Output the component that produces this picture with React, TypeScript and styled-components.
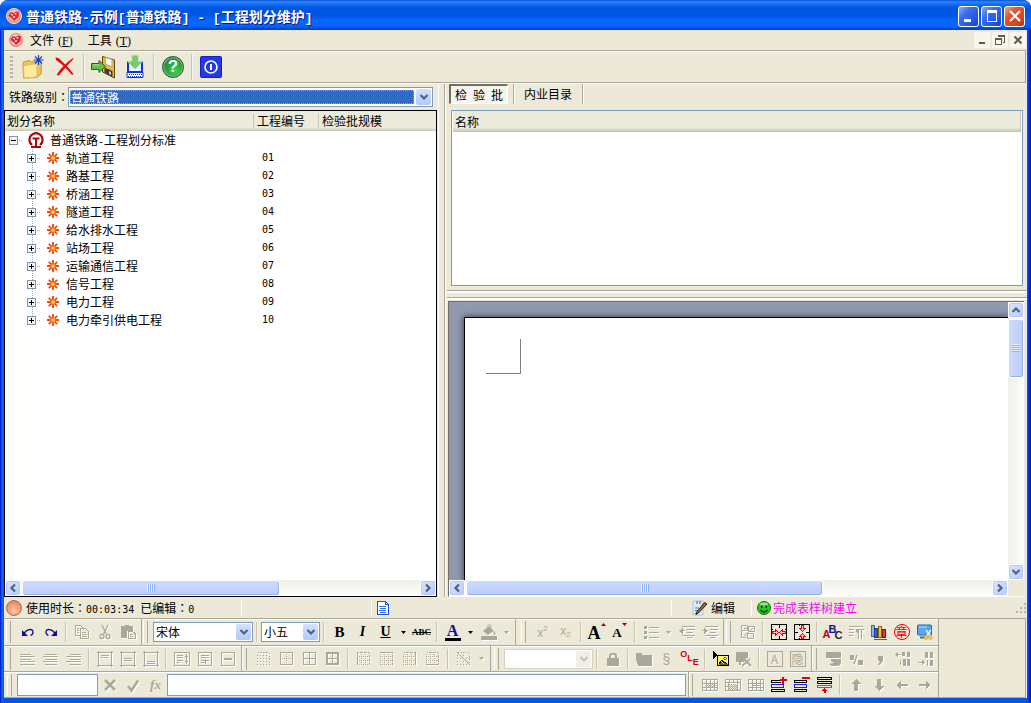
import React from 'react';
import styled, { createGlobalStyle, css } from 'styled-components';

const FACE = '#ece9d8';
const SHADE = '#aca899';
const CJK = '"Noto Sans CJK SC", sans-serif';

const GlobalStyle = createGlobalStyle`
  * { box-sizing: border-box; }
  body {
    margin: 0;
    background: #fff;
    font: 12px/16px ${CJK};
    color: #000;
  }
  button, input, select { font: inherit; color: inherit; margin: 0; padding: 0; border: 0; background: none; border-radius: 0; }
  svg { display: block; flex: none; }
`;

/* ---------- text ---------- */

const Latin = styled.span<{ $size?: number }>`
  font-family: "DejaVu Sans Mono", monospace;
  font-size: ${p => p.$size || 10}px;
  line-height: 10px;
  white-space: pre;
`;
const Colon = styled.span`font-family: "Noto Sans CJK JP", sans-serif;`;

/* Latin runs take half the width of a Chinese character. */
function Mixed({ text, size }: { text: string; size?: number }) {
  return (
    <>
      {text.split(/([\x20-\x7e]+|：)/).filter(Boolean).map((part, i) =>
        part === '：' ? <Colon key={i}>{part}</Colon>
          : /^[\x20-\x7e]/.test(part) ? <Latin key={i} $size={size}>{part}</Latin>
          : part)}
    </>
  );
}

/* ---------- window frame ---------- */

const Window = styled.div`
  min-height: 100vh;
  display: flex;
  flex-direction: column;
  border-radius: 8px 8px 0 0;
  overflow: hidden;
  background: linear-gradient(90deg, #0019cf 0, #0831d9 1px, #166aee 2px, #0855dd 4px, #0855dd calc(100% - 4px), #0048f0 calc(100% - 3px), #001dd0 calc(100% - 1px), #00138c 100%);
`;
const TitleBar = styled.header`
  height: 30px;
  display: flex;
  align-items: center;
  gap: 4px;
  padding: 2px 6px 0 6px;
  background: linear-gradient(180deg, #0a4fd6 0, #2f86ff 2px, #1670f5 4px, #0055e0 8px, #0056e6 15px, #0567ff 21px, #0566fc 26px, #0046d8 29px, #003ccb 30px);
`;
const Title = styled.h1`
  flex: 1;
  margin: 0;
  font-size: 14px;
  line-height: 20px;
  font-weight: 700;
  color: #fff;
  text-shadow: 1px 1px 0 #0a1883;
  white-space: nowrap;
  ${Latin} { font-family: "Liberation Mono", monospace; }
`;
const CaptionButtons = styled.div`display: flex; gap: 2px;`;
const CaptionButton = styled.button<{ $red?: boolean }>`
  width: 21px;
  height: 21px;
  display: grid;
  place-items: center;
  border: 1px solid #fff;
  border-radius: 3px;
  color: #fff;
  background: ${p => p.$red
    ? 'linear-gradient(135deg, #f0a088 0, #e3552f 35%, #d8431c 75%, #a93513 100%)'
    : 'linear-gradient(135deg, #8aa9f5 0, #3a6cf0 35%, #2257e2 75%, #1640b8 100%)'};
`;
const Client = styled.main`
  flex: 1;
  margin: 0 4px 5px;
  display: flex;
  flex-direction: column;
  background: ${FACE};
`;

/* ---------- menu and main toolbar ---------- */

const MenuBar = styled.nav`
  height: 20px;
  display: flex;
  align-items: center;
  padding: 0 1px 0 4px;
`;
const MenuItem = styled.button`
  height: 18px;
  margin-left: 6px;
  margin-right: 8px;
  line-height: 18px;
  white-space: nowrap;
  ${Latin} { font-family: "Liberation Serif", serif; font-size: 12px; padding: 0 1px; }
`;
const MdiButtons = styled.div`margin-left: auto; display: flex; gap: 2px;`;
const MdiButton = styled.button`
  width: 16px;
  height: 16px;
  display: grid;
  place-items: center;
  background: #f7f5ec;
  color: #5f5d52;
`;
const MainToolbar = styled.div`
  height: 33px;
  display: flex;
  align-items: center;
  margin-right: 1px;
  border: 1px solid ${SHADE};
  border-left: 0;
  box-shadow: inset 0 1px 0 #fff, 0 1px 0 #fff;
`;
const DotGrip = styled.span`
  width: 3px;
  height: 22px;
  margin: 0 4px 0 6px;
  background: repeating-linear-gradient(180deg, #b9b5a4 0, #b9b5a4 2px, transparent 2px, transparent 4px);
`;
const MainButton = styled.button`
  width: 32px;
  height: 28px;
  display: grid;
  place-items: center;
`;
const MainDivider = styled.span`
  width: 2px;
  height: 26px;
  margin: 0 2px;
  border-left: 1px solid #c9c5b2;
  border-right: 1px solid #f8f7f0;
`;
const HelpDisc = styled.span`
  width: 22px;
  height: 22px;
  border-radius: 50%;
  border: 1px solid #2c4f36;
  box-shadow: inset 0 0 0 1px #9fb5a4;
  background: radial-gradient(circle at 60% 70%, #3fd04a 0, #22a238 50%, #1c7a2e 100%);
  color: #fff;
  font: 700 17px/20px "Liberation Sans", sans-serif;
  text-align: center;
`;

/* ---------- split panes ---------- */

const Workspace = styled.section`
  flex: 1;
  display: grid;
  grid-template-columns: minmax(0, 433fr) 11px minmax(0, 577fr);
  padding: 1px 2px 0 0;
  min-height: 400px;
`;
const Splitter = styled.div<{ $flat?: boolean }>`
  ${p => p.$flat ? css`
    height: 8px;
    margin: 4px -2px 0 -1px;
    border-top: 1px solid ${SHADE};
    border-bottom: 1px solid ${SHADE};
    box-shadow: inset 0 2px 0 #fff, 0 2px 0 #fff;
  ` : css`
    width: 8px;
    margin-left: 1px;
    border-left: 1px solid #fff;
    border-right: 1px solid #fff;
    box-shadow: inset -1px 0 0 ${SHADE};
  `}
`;
const LeftPane = styled.div`display: flex; flex-direction: column;`;
const RightPane = styled.div`display: flex; flex-direction: column;`;

const LevelRow = styled.label`
  height: 26px;
  display: flex;
  align-items: center;
  padding: 0 4px 0 5px;
  white-space: nowrap;
`;
const ComboBox = styled.span<{ $width?: number; $off?: boolean }>`
  height: 20px;
  display: flex;
  padding: 1px;
  ${p => p.$width ? css`width: ${p.$width}px;` : css`flex: 1; margin-left: -1px;`}
  background: #fff;
  border: 1px solid ${p => (p.$off ? '#d5d2c3' : '#7f9db9')};
`;
const ComboField = styled.select<{ $selected?: boolean }>`
  appearance: none;
  flex: 1;
  min-width: 0;
  padding: 0 1px;
  line-height: 14px;
  outline: none;
  opacity: 1;
  ${p => p.$selected && css`
    margin: 1px 2px 1px 0;
    color: #fff;
    background: #316ac5;
    border: 1px dotted #d9a23a;
    padding: 0;
  `}
`;
const ComboArrow = styled.span<{ $off?: boolean }>`
  width: 15px;
  display: grid;
  place-items: center;
  border-radius: 2px;
  color: ${p => (p.$off ? '#c5c2b2' : '#4d6185')};
  background: ${p => (p.$off ? '#f0efe6' : 'linear-gradient(180deg, #d3e0fd, #b4c8f6)')};
`;

const TreeBox = styled.div`
  flex: 1;
  display: flex;
  flex-direction: column;
  background: #fff;
  border: 1px solid #000;
`;
const TreeTable = styled.table`
  width: 100%;
  table-layout: fixed;
  border-collapse: collapse;
  td { height: 18px; padding: 0 0 0 9px; line-height: 16px; vertical-align: middle; white-space: nowrap; }
  td:first-child { padding: 0; }
`;
const HeadCell = styled.th<{ $width?: number; $first?: boolean }>`
  height: 20px;
  ${p => p.$width && css`width: ${p.$width}px;`}
  padding: 0 0 0 ${p => (p.$first ? 2 : 4)}px;
  font-weight: 400;
  text-align: left;
  white-space: nowrap;
  background:
    linear-gradient(#c9c6b5, #c9c6b5) left center / ${p => (p.$first ? 0 : 1)}px 14px no-repeat,
    linear-gradient(180deg, #ebeadb 0, #ebeadb 17px, #dedbc9 18px, #cbc7b8 20px);
`;
const NodeCell = styled.div<{ $child?: boolean }>`
  display: flex;
  align-items: center;
  height: 18px;
  padding-left: ${p => (p.$child ? 22 : 4)}px;
`;
const Toggle = styled.button`width: 16px; height: 18px;`;
const NodeLabel = styled.span`margin-left: 6px;`;
const WorkMark = styled.span`margin-left: 3px;`;
const CodeText = styled.div`
  height: 18px;
  display: flex;
  align-items: center;
`;
const Fill = styled.div`flex: 1;`;

/* ---------- scroll bars ---------- */

const Scroll = styled.div<{ $vertical?: boolean }>`
  display: flex;
  flex-direction: ${p => (p.$vertical ? 'column' : 'row')};
  ${p => (p.$vertical ? 'width: 16px;' : 'height: 16px;')}
  background: linear-gradient(${p => (p.$vertical ? '90deg' : '180deg')}, #f0efe8, #fdfdfb);
`;
const ScrollButton = styled.button`
  width: 16px;
  height: 16px;
  display: grid;
  place-items: center;
  border: 1px solid #fff;
  border-radius: 3px;
  box-shadow: inset 0 0 0 1px #b4c8f6;
  background: linear-gradient(135deg, #dbe5fe, #b9cbf8);
  color: #4d6185;
`;
const Track = styled.div<{ $vertical?: boolean }>`
  flex: 1;
  display: flex;
  padding: ${p => (p.$vertical ? '1px 0' : '0 1px')};
`;
const Thumb = styled.div<{ $part: string; $vertical?: boolean }>`
  display: grid;
  place-items: center;
  ${p => (p.$vertical ? css`width: 16px; height: ${p.$part};` : css`height: 16px; width: ${p.$part};`)}
  border: 1px solid #fff;
  border-radius: 3px;
  box-shadow: inset -1px -1px 0 #98b1e4;
  background: linear-gradient(${p => (p.$vertical ? '90deg' : '180deg')}, #cbdafe, #bccdfa);
`;
const Ridges = styled.span<{ $vertical?: boolean }>`
  width: 8px;
  height: 8px;
  background: repeating-linear-gradient(${p => (p.$vertical ? '180deg' : '90deg')}, #eef4fe 0, #eef4fe 1px, #8cb0f8 1px, #8cb0f8 2px);
`;

/* ---------- right pane ---------- */

const Tabs = styled.div`
  height: 26px;
  display: flex;
  align-items: flex-start;
  padding-left: 1px;
`;
const Tab = styled.button<{ $on?: boolean }>`
  height: 20px;
  padding: 0 1px 0 5px;
  line-height: 18px;
  white-space: nowrap;
  ${p => p.$on ? css`
    border: 1px solid #fff;
    border-top: 2px solid #716f64;
    border-left: 2px solid #716f64;
    background: #f6f4ec;
    padding: 0 4px;
  ` : css`margin: 0 4px;`}
`;
const TabDivider = styled.span`
  width: 2px;
  height: 20px;
  margin-left: 5px;
  border-left: 1px solid ${SHADE};
  border-right: 1px solid #fff;
`;
const ListBox = styled.div`
  height: 176px;
  margin: 0 2px 0 3px;
  padding: 0 1px;
  background: #fff;
  border: 1px solid #7f9db9;
`;
const ListTable = styled.table`
  width: 100%;
  border-collapse: collapse;
  th { height: 21px; border-right: 1px solid #c9c6b5; }
`;
const DocFrame = styled.div`
  flex: 1;
  margin: 3px 1px 0 0;
  display: grid;
  grid-template-columns: minmax(0, 1fr) 16px;
  grid-template-rows: minmax(0, 1fr) 16px;
  border-top: 1px solid #716f64;
  border-left: 1px solid #716f64;
  border-bottom: 1px solid #fff;
`;
const Desk = styled.div`
  display: flex;
  padding: 15px 0 0 15px;
  overflow: hidden;
  background: #9099ae;
`;
const Paper = styled.div`
  flex: 1;
  padding: 21px;
  background: #fff;
  border-top: 1px solid #000;
  border-left: 1px solid #000;
  box-shadow: 0 0 6px 1px #4a4f5f;
`;
const CornerMark = styled.div`
  width: 35px;
  height: 35px;
  border-right: 1px solid #808080;
  border-bottom: 1px solid #808080;
`;

/* ---------- status bar ---------- */

const StatusBar = styled.div`
  height: 20px;
  margin-top: 1px;
  display: flex;
  align-items: center;
  white-space: nowrap;
`;
const StatusPart = styled.div<{ $width?: number; $indent: number; $line?: boolean }>`
  height: 16px;
  display: flex;
  align-items: center;
  gap: 3px;
  ${p => p.$width ? css`width: ${p.$width}px;` : css`flex: 1;`}
  padding-left: ${p => p.$indent}px;
  ${p => p.$line && css`border-left: 1px solid #fff;`}
`;
const Notice = styled.span`color: #f0f; margin-left: -1px;`;
const Ball = styled.span`
  width: 16px;
  height: 16px;
  margin-right: 1px;
  border-radius: 50%;
  border: 1px solid #b06a50;
  background: radial-gradient(circle at 50% 70%, #ffc9a8 0, #f5946c 60%, #e0704a 100%);
`;

/* ---------- format bars ---------- */

const Bars = styled.div`
  display: flex;
  flex-direction: column;
  align-items: flex-start;
  margin-right: 1px;
  border-top: 1px solid ${SHADE};
  border-right: 1px solid ${SHADE};
  border-bottom: 1px solid ${SHADE};
`;
const Bar = styled.div`
  height: 26px;
  width: 935px;
  display: flex;
  box-shadow: inset 0 1px 0 #fff;
  border-right: 1px solid ${SHADE};
  & + & { border-top: 1px solid ${SHADE}; }
`;
const Group = styled.div<{ $last?: boolean }>`
  display: flex;
  align-items: center;
  padding-right: 2px;
  ${p => !p.$last && css`border-right: 1px solid ${SHADE};`}
`;
const Grip = styled.span<{ $space: number }>`
  width: ${p => p.$space}px;
  height: 22px;
  display: flex;
  justify-content: flex-end;
  padding-right: 5px;
  &::after {
    content: '';
    width: 3px;
    border-left: 1px solid #fff;
    border-right: 1px solid ${SHADE};
  }
`;
const Tool = styled.button<{ $narrow?: boolean }>`
  width: ${p => (p.$narrow ? 13 : 23)}px;
  height: 22px;
  display: grid;
  place-items: center;
  &:disabled { color: #aca899; }
  &:disabled svg { filter: drop-shadow(1px 1px 0 #fff); }
`;
const ToolDivider = styled.span`
  width: 2px;
  height: 20px;
  margin: 0 3px;
  border-left: 1px solid #c5c2b0;
  border-right: 1px solid #f8f7f0;
`;
const Letter = styled.span<{ $size?: number; $italic?: boolean; $under?: boolean; $strike?: boolean; $color?: string }>`
  font: ${p => (p.$italic ? 'italic ' : '')}700 ${p => p.$size || 14}px/16px "Liberation Serif", serif;
  color: ${p => p.$color || 'inherit'};
  text-decoration: ${p => (p.$under ? 'underline' : p.$strike ? 'line-through' : 'none')};
`;
const InkStack = styled.span`
  width: 16px;
  height: 17px;
  border-bottom: 3px solid #000;
  text-align: center;
  ${Letter} { display: block; line-height: 14px; }
`;
const Script = styled.span<{ $low?: boolean }>`
  display: flex;
  align-items: ${p => (p.$low ? 'flex-start' : 'flex-end')};
  height: 14px;
  font: 12px/12px "Liberation Sans", sans-serif;
  small { font-size: 8px; line-height: 8px; align-self: ${p => (p.$low ? 'flex-end' : 'flex-start')}; }
`;
const Resize = styled.span`
  display: flex;
  align-items: flex-start;
  height: 18px;
  ${Letter} { line-height: 20px; }
`;
const Framed = styled.span<{ $color?: string; $round?: boolean }>`
  width: 16px;
  height: 16px;
  border: 1px solid ${p => p.$color || 'currentColor'};
  border-radius: ${p => (p.$round ? '50%' : '0')};
  color: ${p => p.$color || 'inherit'};
  font-size: 12px;
  line-height: 13px;
  display: flex;
  justify-content: center;
  white-space: nowrap;
`;
const OleMark = styled.span`
  display: flex;
  color: #d80008;
  font: 700 9px/9px "Liberation Sans", sans-serif;
  span:nth-child(1) { padding-bottom: 8px; }
  span:nth-child(2) { padding-top: 4px; }
  span:nth-child(3) { padding-top: 8px; }
`;
const AbcMark = styled.span`
  display: flex;
  font: 700 11px/11px "Liberation Sans", sans-serif;
  span { margin: 0 -1px; }
  span:nth-child(1) { padding-top: 5px; color: #c00010; }
  span:nth-child(2) { padding-bottom: 5px; color: #10109c; }
  span:nth-child(3) { padding-top: 6px; color: #222; }
`;
const Entry = styled.input<{ $width: number }>`
  width: ${p => p.$width}px;
  height: 22px;
  padding: 0 3px;
  background: #fff;
  border: 1px solid #7f9db9;
`;

/* ---------- drawings ---------- */

const Art = ({ d, fill, children, soft, size = 16, w = 1 }: {
  d?: string; fill?: string; children?: React.ReactNode; soft?: boolean; size?: number; w?: number;
}) => (
  <svg width={size} height={size} viewBox={`0 0 ${size} ${size}`} fill="none" stroke="currentColor"
    strokeWidth={w} shapeRendering={soft ? 'auto' : 'crispEdges'} aria-hidden="true">
    {fill && <path d={fill} fill="currentColor" stroke="none" />}
    {d && <path d={d} />}
    {children}
  </svg>
);

const Caret = () => (
  <svg width="5" height="3" viewBox="0 0 5 3" aria-hidden="true"><path d="M0 0h5L2.500 3z" fill="currentColor" /></svg>
);
const Nudge = ({ up }: { up?: boolean }) => (
  <svg width="5" height="3" viewBox="0 0 5 3" aria-hidden="true"><path d={up ? 'M0 3h5L2.500 0z' : 'M0 0h5L2.500 3z'} fill="#a00010" /></svg>
);
const turn = { left: 90, up: 180, right: 270, down: 0 };
const Chevron = ({ to = 'down' }: { to?: keyof typeof turn }) => (
  <svg width="10" height="10" viewBox="0 0 10 10" aria-hidden="true">
    <path d="M1.500 3L5 6.500 8.500 3" fill="none" stroke="currentColor" strokeWidth="2.200" transform={`rotate(${turn[to]} 5 5)`} />
  </svg>
);

const AppLogo = () => (
  <svg width="16" height="16" viewBox="0 0 16 16" aria-hidden="true">
    <circle cx="8" cy="8" r="7.500" fill="#ef8f74" stroke="#fbe0d4" />
    <circle cx="8" cy="7.500" r="5.500" fill="#f9cdbc" />
    <path d="M2.500 7l2.500-3 2.500 1 2.500-1.500 3 1-.5 4.500L8 13l-2-2.500L3.500 9z" fill="#d8243c" />
    <path d="M5 6l2 1.500M8.500 5.500l2 .5M7 9.500l2-1" stroke="#fbd6cc" strokeWidth="1.400" fill="none" />
  </svg>
);
const RailMark = () => (
  <svg width="16" height="16" viewBox="0 0 16 16" fill="none" stroke="#a4070b" aria-hidden="true">
    <path d="M4 13A6.600 6.600 0 1 1 12 13" strokeWidth="2.200" />
    <path d="M8 0v2" strokeWidth="2" />
    <path d="M4.500 6.500h7" strokeWidth="2" />
    <path d="M8 7v8" strokeWidth="2" />
    <path d="M3 15h10" strokeWidth="1.800" />
  </svg>
);
const Spark = () => (
  <svg width="14" height="14" viewBox="0 0 14 14" aria-hidden="true">
    <path d="M7 1v12M1 7h12M2.800 2.800l8.400 8.400M11.200 2.800l-8.400 8.400" stroke="#ef4a1c" strokeWidth="1.900" />
    <circle cx="7" cy="7" r="2.600" fill="#f77b20" />
    <circle cx="7" cy="7" r="1.500" fill="#ffe24a" />
  </svg>
);
const Branch = ({ open, last }: { open?: boolean; last?: boolean }) => (
  <svg width="16" height="18" viewBox="0 0 16 18" shapeRendering="crispEdges" aria-hidden="true">
    {!open && <path d={last ? 'M5.500 0v9' : 'M5.500 0v18'} stroke="#aca899" strokeDasharray="1 1" />}
    <path d="M10 9.500h4" stroke="#aca899" strokeDasharray="1 1" />
    <rect x="0.500" y="5.500" width="8" height="8" fill="#f4f3ee" stroke="#7b95b5" />
    <path d={open ? 'M2 9.500h5' : 'M2 9.500h5M4.500 7v5'} stroke="#000" />
  </svg>
);

const NewFolder = () => (
  <svg width="24" height="24" viewBox="0 0 24 24" aria-hidden="true">
    <path d="M2 8.500l.5-1.500 6-1.500L10.500 7l9-1.500 1 1.500-.5 12-4 3.500L2.500 23z" fill="#efc552" stroke="#c39a35" />
    <path d="M2.500 10.500l13.500-2V22l-13 1z" fill="#fdeaa0" stroke="#dfbb50" />
    <path d="M17.500 0v10M12.500 5h10M14 1.500l7 7M21 1.500l-7 7" stroke="#1247c8" strokeWidth="1.200" />
  </svg>
);
const RedCross = () => (
  <svg width="20" height="20" viewBox="0 0 20 20" aria-hidden="true">
    <path d="M.5.500l3 .5C8 5 13 10 18.500 17l-1.500 1C12 12 7 7 1 3zM18 1l.5 1C13 8 8 13 4 18.500L1.500 18C6 11 11 6 18 1z" fill="#e20d10" />
  </svg>
);
const SaveDisk = () => (
  <svg width="26" height="24" viewBox="0 0 26 24" aria-hidden="true">
    <path d="M12.500 1.500l12 3.500v18L12.500 17z" fill="#f2bd22" stroke="#5c4708" />
    <path d="M15.500 2.500l6.500 2v7.500l-6.500-3z" fill="#f4f4f4" stroke="#a9a9a9" />
    <path d="M14.500 12.500l8 3.500V22l-8-4.500z" fill="#3a3a3a" />
    <path d="M19 16l2 1v3l-2-1z" fill="#ccc" />
    <path d="M1.500 8.500H9v-3l6.500 6-6.500 6v-3H1.500z" fill="#66bd4a" stroke="#25621d" />
    <path d="M3 10h6.500" stroke="#b8eb9f" />
  </svg>
);
const ImportPc = () => (
  <svg width="18" height="24" viewBox="0 0 18 24" aria-hidden="true">
    <path d="M2 7h14v10H2z" fill="#e9efff" stroke="#1430d8" strokeWidth="2" />
    <path d="M6 .500h6v6h4.500L9 14 1.500 6.500H6z" fill="#79c964" stroke="#a4dc93" />
    <path d="M1 17.500h16v5H1z" fill="#fff" stroke="#1430d8" />
    <path d="M3 19.500h13M2 21.500h13" stroke="#1430d8" strokeDasharray="1 1" />
  </svg>
);
const Power = () => (
  <svg width="22" height="22" viewBox="0 0 22 22" fill="none" aria-hidden="true">
    <rect x="0.500" y="0.500" width="21" height="21" rx="1" fill="#2438ea" stroke="#141fc0" />
    <circle cx="11" cy="11" r="6" stroke="#fff" strokeWidth="1.700" />
    <path d="M11 8v6" stroke="#fff" strokeWidth="2" />
  </svg>
);
const Sheet = () => (
  <Art size={14}><path d="M1.500.5h8l3 3v10h-11z" fill="#fff" stroke="#1a52e0" /><path d="M9.500.5v3h3" stroke="#1a52e0" /><path d="M4 5.500h6M4 7.500h6M4 9.500h6M4 11.500h6" stroke="#2b6cf0" /><path d="M3 5.500h1M3 9.500h1" stroke="#e33" /></Art>
);
const EditSheet = () => (
  <svg width="16" height="16" viewBox="0 0 16 16" aria-hidden="true">
    <path d="M1 1h10v14H1z" fill="#dcecff" stroke="#a9c2e6" />
    <path d="M3 8h4M3 10.500h3" stroke="#3777c8" />
    <path d="M4 13l8.500-10.500L15 4l-8.500 9L4 14.500z" fill="#a96a22" stroke="#2a1a08" />
    <path d="M5 1v3M8 1v3" stroke="#d22" />
  </svg>
);
const Smiley = () => (
  <svg width="14" height="14" viewBox="0 0 14 14" aria-hidden="true">
    <circle cx="7" cy="7" r="6.500" fill="#2fc422" stroke="#14720e" />
    <ellipse cx="7" cy="3" rx="4" ry="1.500" fill="#8cf07c" />
    <path d="M4.700 4.500v2.500M9.300 4.500v2.500M3.500 8.800c1.500 3 5.500 3 7 0" stroke="#032" strokeWidth="1.400" fill="none" />
  </svg>
);
const ResizeGrip = () => (
  <svg width="12" height="12" viewBox="0 0 12 12" aria-hidden="true">
    <path d="M9 1h2v2H9zM5 5h2v2H5zM9 5h2v2H9zM1 9h2v2H1zM5 9h2v2H5zM9 9h2v2H9z" fill="#b8b4a3" />
  </svg>
);

const I = {
  undo: <Art soft w={1.3} d="M4 9.500C6 5 13 4 13 8c0 1.500-1 3-2.500 3.500" fill="M2 6v6h6z" />,
  redo: <Art soft w={1.3} d="M12 9.500C10 5 3 4 3 8c0 1.500 1 3 2.500 3.500" fill="M14 6v6H8z" />,
  copy: <Art d="M6.500 11.500h-5v-10h5l3 3v1M6.500 4.500h5l3 3v7h-8zM3 4.500h2M3 6.500h2M3 8.500h2M8 8.500h4M8 10.500h5M8 12.500h5" />,
  cut: <Art soft w={1.3} d="M5 1l4.500 9.500M11 1L6.500 10.500"><circle cx="5" cy="12.500" r="2" /><circle cx="11" cy="12.500" r="2" /></Art>,
  paste: <Art fill="M1 2h4V1h4v1h4v5H7v7H1z" d="M8.500 7.500h4l2.500 2v5H8.500zM10 10.500h3M10 12.500h3" />,
  bucket: <Art soft fill="M2 7l6-5 5 5-6 4zM13 7c2 2 2 4 1 4s-2-2-1-4zM0 12h16v4H0z" d="M7 5V1.500c0-1 3-1 3 0V7" />,
  bullets: <Art d="M6 3.500h10M6 8.500h10M6 13.500h10" fill="M1 2h3v3H1zM1 7h3v3H1zM1 12h3v3H1z" />,
  outdent: <Art d="M3 2.500h13M8 5.500h8M8 8.500h6M3 11.500h13M8 13.500h6M3 6.500h3" fill="M0 6.500L4 4v6z" />,
  indent: <Art d="M3 2.500h13M8 5.500h8M8 8.500h6M3 11.500h13M8 13.500h6M0 6.500h3" fill="M6 6.500L2 4v6z" />,
  find: <Art soft d="M1.500 1.500h6v5h-6zM1.500 6.500v7h5M4 4.500h4M8.500 2.500h6v5h-6zM7.500 9.500h6v5h-6zM4 12L13 4" />,
  mergeH: <Art><path d="M.5.500h15v15H.5zM8.500 0v4M8.500 12v4M0 5.500h2M14 5.500h2" stroke="#000" /><path d="M1.500 7.500h3v-2l3 3-3 3v-2h-3zM14.500 7.500h-3v-2l-3 3 3 3v-2h3z" fill="#ffb9c4" stroke="#e80010" /></Art>,
  mergeV: <Art><path d="M.5.500h15v15H.5zM0 8.500h4M12 8.500h4M5.500 0v2M5.500 14v2" stroke="#000" /><path d="M7.500 1.500v3h-2l3 3 3-3h-2v-3zM7.500 14.500v-2h-2l3-3 3 3h-2v2z" fill="#ffb9c4" stroke="#e80010" /></Art>,
  pilcrow: <Art d="M1 2.500h14M1 5.500h5M1 8.500h5M1 11.500h4M9 5.500h7M10.500 6v9M13.500 6v9" fill="M8 5h3v4H9L8 8z" />,
  books: <Art><path d="M.5 1.500h3v11h-3z" fill="#8ab6ee" stroke="#3c6cb4" /><path d="M3.500 4.500h3v9h-3z" fill="#3565bd" stroke="#1c3f80" /><path d="M7.500 2.500h3v11h-3z" fill="#f0c040" stroke="#8a6410" /><path d="M11.500 5.500h3v8h-3z" fill="#d84020" stroke="#7d1508" /><path d="M3 15.500h13" stroke="#606060" /></Art>,
  screenCut: <Art soft><rect x="0.500" y="1" width="14" height="10" rx="1" fill="#58a8f0" stroke="#2466ad" /><path d="M2 3h8" stroke="#b9dcff" /><path d="M3 13.500h6" stroke="#3c6fa8" strokeWidth="2" /><path d="M9 6l4.500 6M14 6l-4.500 6" stroke="#eef4ff" strokeWidth="1.500" /><circle cx="9" cy="13.500" r="1.700" fill="#ffe37a" stroke="#d99500" /><circle cx="13.500" cy="13.500" r="1.700" fill="#ffe37a" stroke="#d99500" /></Art>,
  alignL: <Art d="M0 3.500h11M0 5.500h15M0 8.500h11M0 10.500h15M0 13.500h15" />,
  alignC: <Art d="M2 3.500h12M0 5.500h15M2 8.500h12M0 10.500h15M2 13.500h12" />,
  alignR: <Art d="M4 3.500h11M0 5.500h15M4 8.500h11M0 10.500h15M4 13.500h11" />,
  top: <Art d="M1.500 0v16M14.500 0v16M0 1.500h16M0 14.500h16M4 4.500h8M4 6.500h8" />,
  middle: <Art d="M1.500 0v16M14.500 0v16M0 1.500h16M0 14.500h16M4 7.500h8M4 9.500h8" />,
  bottom: <Art d="M1.500 0v16M14.500 0v16M0 1.500h16M0 14.500h16M4 10.500h8M4 12.500h8" />,
  spaceV: <Art d="M.5 1.500h15v13H.5zM3 4.500h6M3 6.500h6M3 9.500h6M3 11.500h3M12.500 3v10M11 5.500h3M11 10.500h3" />,
  wrap: <Art d="M1.500 1.500h13v13h-13zM4 4.500h8M4 6.500h8M4 9.500h8M4 11.500h4M8.500 8v5" />,
  single: <Art d="M1.500 1.500h13v13h-13zM4 7.500h8M4 8.500h8" />,
  strokeNone: <Art><path d="M1.500 1.500h12v12h-12zM7.500 1v13M1 7.500h13M4.500 1v13M10.500 1v13" strokeDasharray="1 2" /></Art>,
  gridOut: <Art d="M1.500 1.500h12v12h-12z"><path d="M7.500 3v9M3 7.500h9" strokeDasharray="1 1" /></Art>,
  gridAll: <Art d="M1.500 1.500h12v12h-12zM7.500 1v13M1 7.500h13" />,
  gridThick: <Art><path d="M2 2h11v11H2z" strokeWidth="2" /><path d="M7.500 2v11M2 7.500h11" /></Art>,
  diag: <Art d="M1 1l13 13"><path d="M1.500 1.500h12v12h-12zM7.500 1v13M1 7.500h13" strokeDasharray="1 2" /></Art>,
  lock: <Art soft fill="M2 7h12v8H2z" w={2} d="M5 8V5c0-3 6-3 6 0v3" />,
  folder: <Art fill="M0 2h6v2h10v11H2L0 8z" />,
  percent: <Art soft fill="M1 4h4v5H1zM9 9h5v5H9z" d="M8 4l-3 9" w={1.5} />,
  comma: <Art soft fill="M6 5h5v5l-3 4H6l2-4H6z" />,
  picture: <Art><path d="M4.500 4.500h11v10h-11z" fill="#fff75a" stroke="#000" strokeWidth="1.500" /><path d="M0 0l4 4-4 4z" fill="#000" stroke="none" /><path d="M5 14l3-3 2 2 2-2 3 3z" fill="#666620" stroke="none" /><path d="M6 13l3-4 2 3 1-1 2 2" stroke="#000" /><circle cx="12" cy="7.500" r="1.200" fill="#fff" stroke="#555" /></Art>,
  pictureOff: <Art soft fill="M0 1h12v6l-3 1-1 3H0z" w={2} d="M7 7l8 8M14 8l-8 7M4 11v3" />,
  currency: <Art soft fill="M0 1h15v6H0zM5 8h10v4c0 2-2 3-4 3H6l-3-2 5-1-3-2z" />,
  decMore: <Art fill="M7 1h3v4H7zM12 1h3v5h-3zM5 9h1v5H5zM8 8h3v7H8zM12 8h3v7h-3zM0 3.500L3 1v5z" d="M3 3.500h3" />,
  decLess: <Art fill="M7 1h3v6H7zM12 1h3v6h-3zM12 9h3v6h-3zM9 9h1v6H9zM7 11.500L4 9v5z" d="M0 11.500h4" />,
  no: <Art soft w={2.5} d="M3 3l10 10M13 3L3 13" />,
  yes: <Art soft w={2.5} d="M3 9l3.500 4.500L13 3.500" />,
  cells: <Art d="M.5 2.500h15v11H.5zM0 6.500h16M0 10.500h16M4.500 2v12M8.500 2v12M12.500 2v12"><path d="M4 7.500h10M4 9.500h10M5 8.500h10" strokeDasharray="1 1" /></Art>,
  cellsCol: <Art d="M.5 2.500h15v11H.5zM0 5.500h16M4.500 2v4M8.500 2v4M12.500 2v4M3.500 6v8M12.500 6v8M0 9.500h3"><path d="M4 7.500h9M5 8.500h8M4 9.500h9M5 10.500h8M4 11.500h9M5 12.500h8" strokeDasharray="1 1" /></Art>,
  cellsRow: <Art d="M.5 2.500h15v11H.5zM0 6.500h16M0 10.500h16M4.500 2v12M8.500 2v12M12.500 2v12M5 8.500h8" />,
  rowAdd: <Art><path d="M.5 3.500h9M.5 5.500h9M.5 3v3M.5 12.500h13v2H.5z" stroke="#000" /><path d="M.5 7.500h12v3H.5z" stroke="#1a1af0" strokeWidth="1.500" /><path d="M12 0v7M9 3h7" stroke="#e00010" strokeWidth="2" /></Art>,
  rowDel: <Art><path d="M.5 3.500h12v2H.5zM.5 12.500h12v2H.5z" stroke="#000" /><path d="M.5 7.500h12v3H.5z" stroke="#1a1af0" strokeWidth="1.500" /><path d="M8 1h8" stroke="#e00010" strokeWidth="2" /></Art>,
  rowEnd: <Art><path d="M.5.500h14v2H.5zM.5 4.500h14v2H.5z" stroke="#000" /><path d="M.5 8.500h14v2H.5z" stroke="#f010e0" /><path d="M7.500 11l3 3h-2v2h-2v-2h-2z" fill="#e00010" stroke="none" /></Art>,
  up: <Art fill="M8 2l5 5h-3v7H6V7H3z" />,
  down: <Art fill="M8 14l5-5h-3V2H6v7H3z" />,
  left: <Art fill="M2 8l5-4v3h7v2H7v3z" />,
  right: <Art fill="M14 8L9 4v3H2v2h7v3z" />,
};

/* Outline variants: one solid edge each, dotted elsewhere. */
const Edge = ({ d }: { d: string }) => (
  <Art d={d}><path d="M1.500 1.500h12v12h-12zM5.500 1v13M9.500 1v13M1 5.500h13M1 9.500h13" strokeDasharray="1 1" /></Art>
);

/* ---------- parts built from the above ---------- */

function ScrollBar({ vertical, part, label }: { vertical?: boolean; part: string; label: string }) {
  return (
    <Scroll $vertical={vertical} role="group" aria-label={label}>
      <ScrollButton aria-label={vertical ? '向上' : '向左'}><Chevron to={vertical ? 'up' : 'left'} /></ScrollButton>
      <Track $vertical={vertical}><Thumb $vertical={vertical} $part={part}><Ridges $vertical={vertical} /></Thumb></Track>
      <ScrollButton aria-label={vertical ? '向下' : '向右'}><Chevron to={vertical ? 'down' : 'right'} /></ScrollButton>
    </Scroll>
  );
}

function Combo({ value, label, width, selected, off }: {
  value: string; label: string; width?: number; selected?: boolean; off?: boolean;
}) {
  return (
    <ComboBox $width={width} $off={off}>
      <ComboField aria-label={label} $selected={selected} disabled={off} defaultValue={value}><option>{value}</option></ComboField>
      <ComboArrow $off={off}><Chevron /></ComboArrow>
    </ComboBox>
  );
}

type ToolSpec = [string, React.ReactNode, boolean?];
/* A run of equal buttons: name, drawing, and whether it is available. */
const Run = ({ items }: { items: ToolSpec[] }) => (
  <>{items.map(([name, art, on]) => <Tool key={name} aria-label={name} disabled={!on}>{art}</Tool>)}</>
);
const More = ({ off, name }: { off?: boolean; name: string }) => <Tool $narrow disabled={off} aria-label={name}><Caret /></Tool>;

const works = ['轨道工程', '路基工程', '桥涵工程', '隧道工程', '给水排水工程', '站场工程', '运输通信工程', '信号工程', '电力工程', '电力牵引供电工程'];

const Navy = styled.span`color: #10108c;`;
const Plain = styled.span`font: 14px/16px "Liberation Sans", sans-serif;`;

function FormatBars() {
  return (
    <Bars>
      <Bar>
        <Group>
          <Grip $space={12} />
          <Run items={[['撤销', <Navy>{I.undo}</Navy>, true], ['重做', <Navy>{I.redo}</Navy>, true]]} />
          <ToolDivider />
          <Run items={[['复制', I.copy], ['剪切', I.cut], ['粘贴', I.paste]]} />
        </Group>
        <Group>
          <Grip $space={11} />
          <Combo label="字体" value="宋体" width={100} />
          <ToolDivider />
          <Combo label="字号" value="小五" width={59} />
          <ToolDivider />
          <Run items={[
            ['加粗', <Letter $size={15}>B</Letter>, true],
            ['倾斜', <Letter $italic>I</Letter>, true],
            ['下划线', <Letter $under>U</Letter>, true],
          ]} />
          <More name="下划线样式" />
          <Run items={[['删除线', <Letter $size={9} $strike>ABC</Letter>, true]]} />
          <ToolDivider />
          <Run items={[['文字颜色', <InkStack><Letter $size={16} $color="#10108c">A</Letter></InkStack>, true]]} />
          <More name="更多文字颜色" />
          <Run items={[['填充', I.bucket]]} />
          <More off name="更多填充" />
        </Group>
        <Group>
          <Grip $space={15} />
          <Run items={[
            ['上标', <Script>x<small>2</small></Script>],
            ['下标', <Script $low>x<small>2</small></Script>],
          ]} />
          <ToolDivider />
          <Run items={[
            ['增大字号', <Resize><Letter $size={18}>A</Letter><Nudge up /></Resize>, true],
            ['减小字号', <Resize><Letter $size={13}>A</Letter><Nudge /></Resize>, true],
          ]} />
          <ToolDivider />
          <Run items={[['项目符号', I.bullets]]} />
          <More off name="更多项目符号" />
          <Run items={[['减少缩进', I.outdent], ['增加缩进', I.indent]]} />
        </Group>
        <Group $last>
          <Grip $space={12} />
          <Run items={[['查找', I.find]]} />
          <ToolDivider />
          <Run items={[['横向合并', I.mergeH, true], ['纵向合并', I.mergeV, true]]} />
          <ToolDivider />
          <Run items={[
            ['字符', <AbcMark><span>A</span><span>B</span><span>C</span></AbcMark>, true],
            ['段落', I.pilcrow],
            ['图库', I.books, true],
            ['印章', <Framed $round $color="#e80000">章</Framed>, true],
            ['截图', I.screenCut, true],
          ]} />
        </Group>
      </Bar>
      <Bar>
        <Group>
          <Grip $space={12} />
          <Run items={[['左对齐', I.alignL], ['居中', I.alignC], ['右对齐', I.alignR]]} />
          <ToolDivider />
          <Run items={[['顶端', I.top], ['中部', I.middle], ['底端', I.bottom]]} />
          <ToolDivider />
          <Run items={[['行距', I.spaceV], ['换行', I.wrap], ['单行', I.single]]} />
        </Group>
        <Group>
          <Grip $space={10} />
          <Run items={[['无边框', I.strokeNone], ['外框', I.gridOut], ['全部边框', I.gridAll], ['粗边框', I.gridThick]]} />
          <ToolDivider />
          <Run items={[
            ['左边框', <Edge d="M1.500 1v13" />],
            ['上边框', <Edge d="M1 1.500h13" />],
            ['右边框', <Edge d="M13.500 1v13" />],
            ['下边框', <Edge d="M1 13.500h13" />],
          ]} />
          <ToolDivider />
          <Run items={[['斜线', I.diag]]} />
          <More off name="更多斜线" />
        </Group>
        <Group>
          <Grip $space={13} />
          <Combo off label="样式" value="" width={89} />
          <ToolDivider />
          <Run items={[['锁定', I.lock]]} />
          <ToolDivider />
          <Run items={[
            ['打开', I.folder],
            ['章节', <Plain>§</Plain>],
            ['对象', <OleMark><span>O</span><span>L</span><span>E</span></OleMark>, true],
          ]} />
          <ToolDivider />
          <Run items={[['插入图片', I.picture, true], ['删除图片', I.pictureOff]]} />
          <ToolDivider />
          <Run items={[['标注', <Framed>A</Framed>], ['隐藏', <Framed>隐</Framed>]]} />
        </Group>
        <Group $last>
          <Grip $space={10} />
          <Run items={[
            ['货币', I.currency],
            ['百分比', I.percent],
            ['千位', I.comma],
            ['增加小数', I.decMore],
            ['减少小数', I.decLess],
          ]} />
        </Group>
      </Bar>
      <Bar>
        <Group>
          <Grip $space={13} />
          <Entry $width={81} aria-label="单元格" />
          <Run items={[['取消', I.no], ['确定', I.yes], ['函数', <Letter $italic $size={13}>fx</Letter>]]} />
          <Entry $width={519} aria-label="公式" />
        </Group>
        <Group $last>
          <Grip $space={9} />
          <Run items={[
            ['单元格格式', I.cells], ['列格式', I.cellsCol], ['行格式', I.cellsRow],
            ['插入行', I.rowAdd, true], ['删除行', I.rowDel, true], ['追加行', I.rowEnd, true],
          ]} />
          <ToolDivider />
          <Run items={[['上移', I.up], ['下移', I.down], ['左移', I.left], ['右移', I.right]]} />
        </Group>
      </Bar>
    </Bars>
  );
}

export default function App() {
  return (
    <Window>
      <GlobalStyle />
      <TitleBar>
        <AppLogo />
        <Title><Mixed text="普通铁路-示例[普通铁路] - [工程划分维护]" size={13} /></Title>
        <CaptionButtons>
          <CaptionButton aria-label="最小化"><Art fill="M3 11h7v3H3z" /></CaptionButton>
          <CaptionButton aria-label="最大化"><Art d="M3.500 3v10.500h9V3" fill="M3 2h10v3H3z" /></CaptionButton>
          <CaptionButton $red aria-label="关闭"><Art soft w={2.2} d="M3 3l10 10M13 3L3 13" /></CaptionButton>
        </CaptionButtons>
      </TitleBar>
      <Client>
        <MenuBar>
          <AppLogo />
          <MenuItem>文件<Latin> (<u>F</u>)</Latin></MenuItem>
          <MenuItem>工具<Latin> (<u>T</u>)</Latin></MenuItem>
          <MdiButtons>
            <MdiButton aria-label="最小化文档"><Art size={10} fill="M2 7h6v2H2z" /></MdiButton>
            <MdiButton aria-label="还原文档"><Art size={10} d="M.5 4v5.500h6V4M3 1.500h6.500V7H8" fill="M0 3h7v2H0zM3 0h7v2H3z" /></MdiButton>
            <MdiButton aria-label="关闭文档"><Art size={10} soft w={2} d="M1.500 1.500l7 7M8.500 1.500l-7 7" /></MdiButton>
          </MdiButtons>
        </MenuBar>
        <MainToolbar>
          <DotGrip />
          <MainButton aria-label="新建"><NewFolder /></MainButton>
          <MainButton aria-label="删除"><RedCross /></MainButton>
          <MainDivider />
          <MainButton aria-label="保存"><SaveDisk /></MainButton>
          <MainButton aria-label="导入"><ImportPc /></MainButton>
          <MainDivider />
          <MainButton aria-label="帮助"><HelpDisc>?</HelpDisc></MainButton>
          <MainDivider />
          <MainButton aria-label="退出"><Power /></MainButton>
        </MainToolbar>

        <Workspace>
          <LeftPane>
            <LevelRow>
              <Mixed text="铁路级别：" />
              <Combo label="铁路级别" value="普通铁路" selected />
            </LevelRow>
            <TreeBox>
              <TreeTable>
                <thead>
                  <tr>
                    <HeadCell $first $width={248}>划分名称</HeadCell>
                    <HeadCell $width={65}>工程编号</HeadCell>
                    <HeadCell>检验批规模</HeadCell>
                  </tr>
                </thead>
                <tbody>
                  <tr>
                    <td><NodeCell><Toggle aria-label="折叠"><Branch open /></Toggle><WorkMark><RailMark /></WorkMark><NodeLabel><Mixed text="普通铁路-工程划分标准" /></NodeLabel></NodeCell></td>
                    <td /><td />
                  </tr>
                  {works.map((name, i) => (
                    <tr key={name}>
                      <td><NodeCell $child><Toggle aria-label="展开"><Branch last={i === works.length - 1} /></Toggle>
                        <WorkMark><Spark /></WorkMark><NodeLabel>{name}</NodeLabel></NodeCell></td>
                      <td><CodeText><Latin>{String(i + 1).padStart(2, '0')}</Latin></CodeText></td>
                      <td />
                    </tr>
                  ))}
                </tbody>
              </TreeTable>
              <Fill />
              <ScrollBar part="65%" label="水平滚动" />
            </TreeBox>
          </LeftPane>
          <Splitter />
          <RightPane>
            <Tabs>
              <Tab $on><Mixed text="检 验 批" /></Tab>
              <TabDivider />
              <Tab>内业目录</Tab>
              <TabDivider />
            </Tabs>
            <ListBox>
              <ListTable><thead><tr><HeadCell $first>名称</HeadCell></tr></thead></ListTable>
            </ListBox>
            <Splitter $flat />
            <DocFrame>
              <Desk><Paper><CornerMark /></Paper></Desk>
              <ScrollBar vertical part="24%" label="文档垂直滚动" />
              <ScrollBar part="68%" label="文档水平滚动" />
            </DocFrame>
          </RightPane>
        </Workspace>

        <StatusBar>
          <StatusPart $width={237} $indent={2}><Ball /><span><Mixed text="使用时长：00:03:34 已编辑：0" /></span></StatusPart>
          <StatusPart $width={130} $indent={0} $line />
          <StatusPart $width={300} $indent={4} $line><Sheet /></StatusPart>
          <StatusPart $width={80} $indent={20} $line><EditSheet /><span>编辑</span></StatusPart>
          <StatusPart $indent={5} $line><Smiley /><Notice>完成表样树建立</Notice></StatusPart>
          <ResizeGrip />
        </StatusBar>
        <FormatBars />
      </Client>
    </Window>
  );
}
